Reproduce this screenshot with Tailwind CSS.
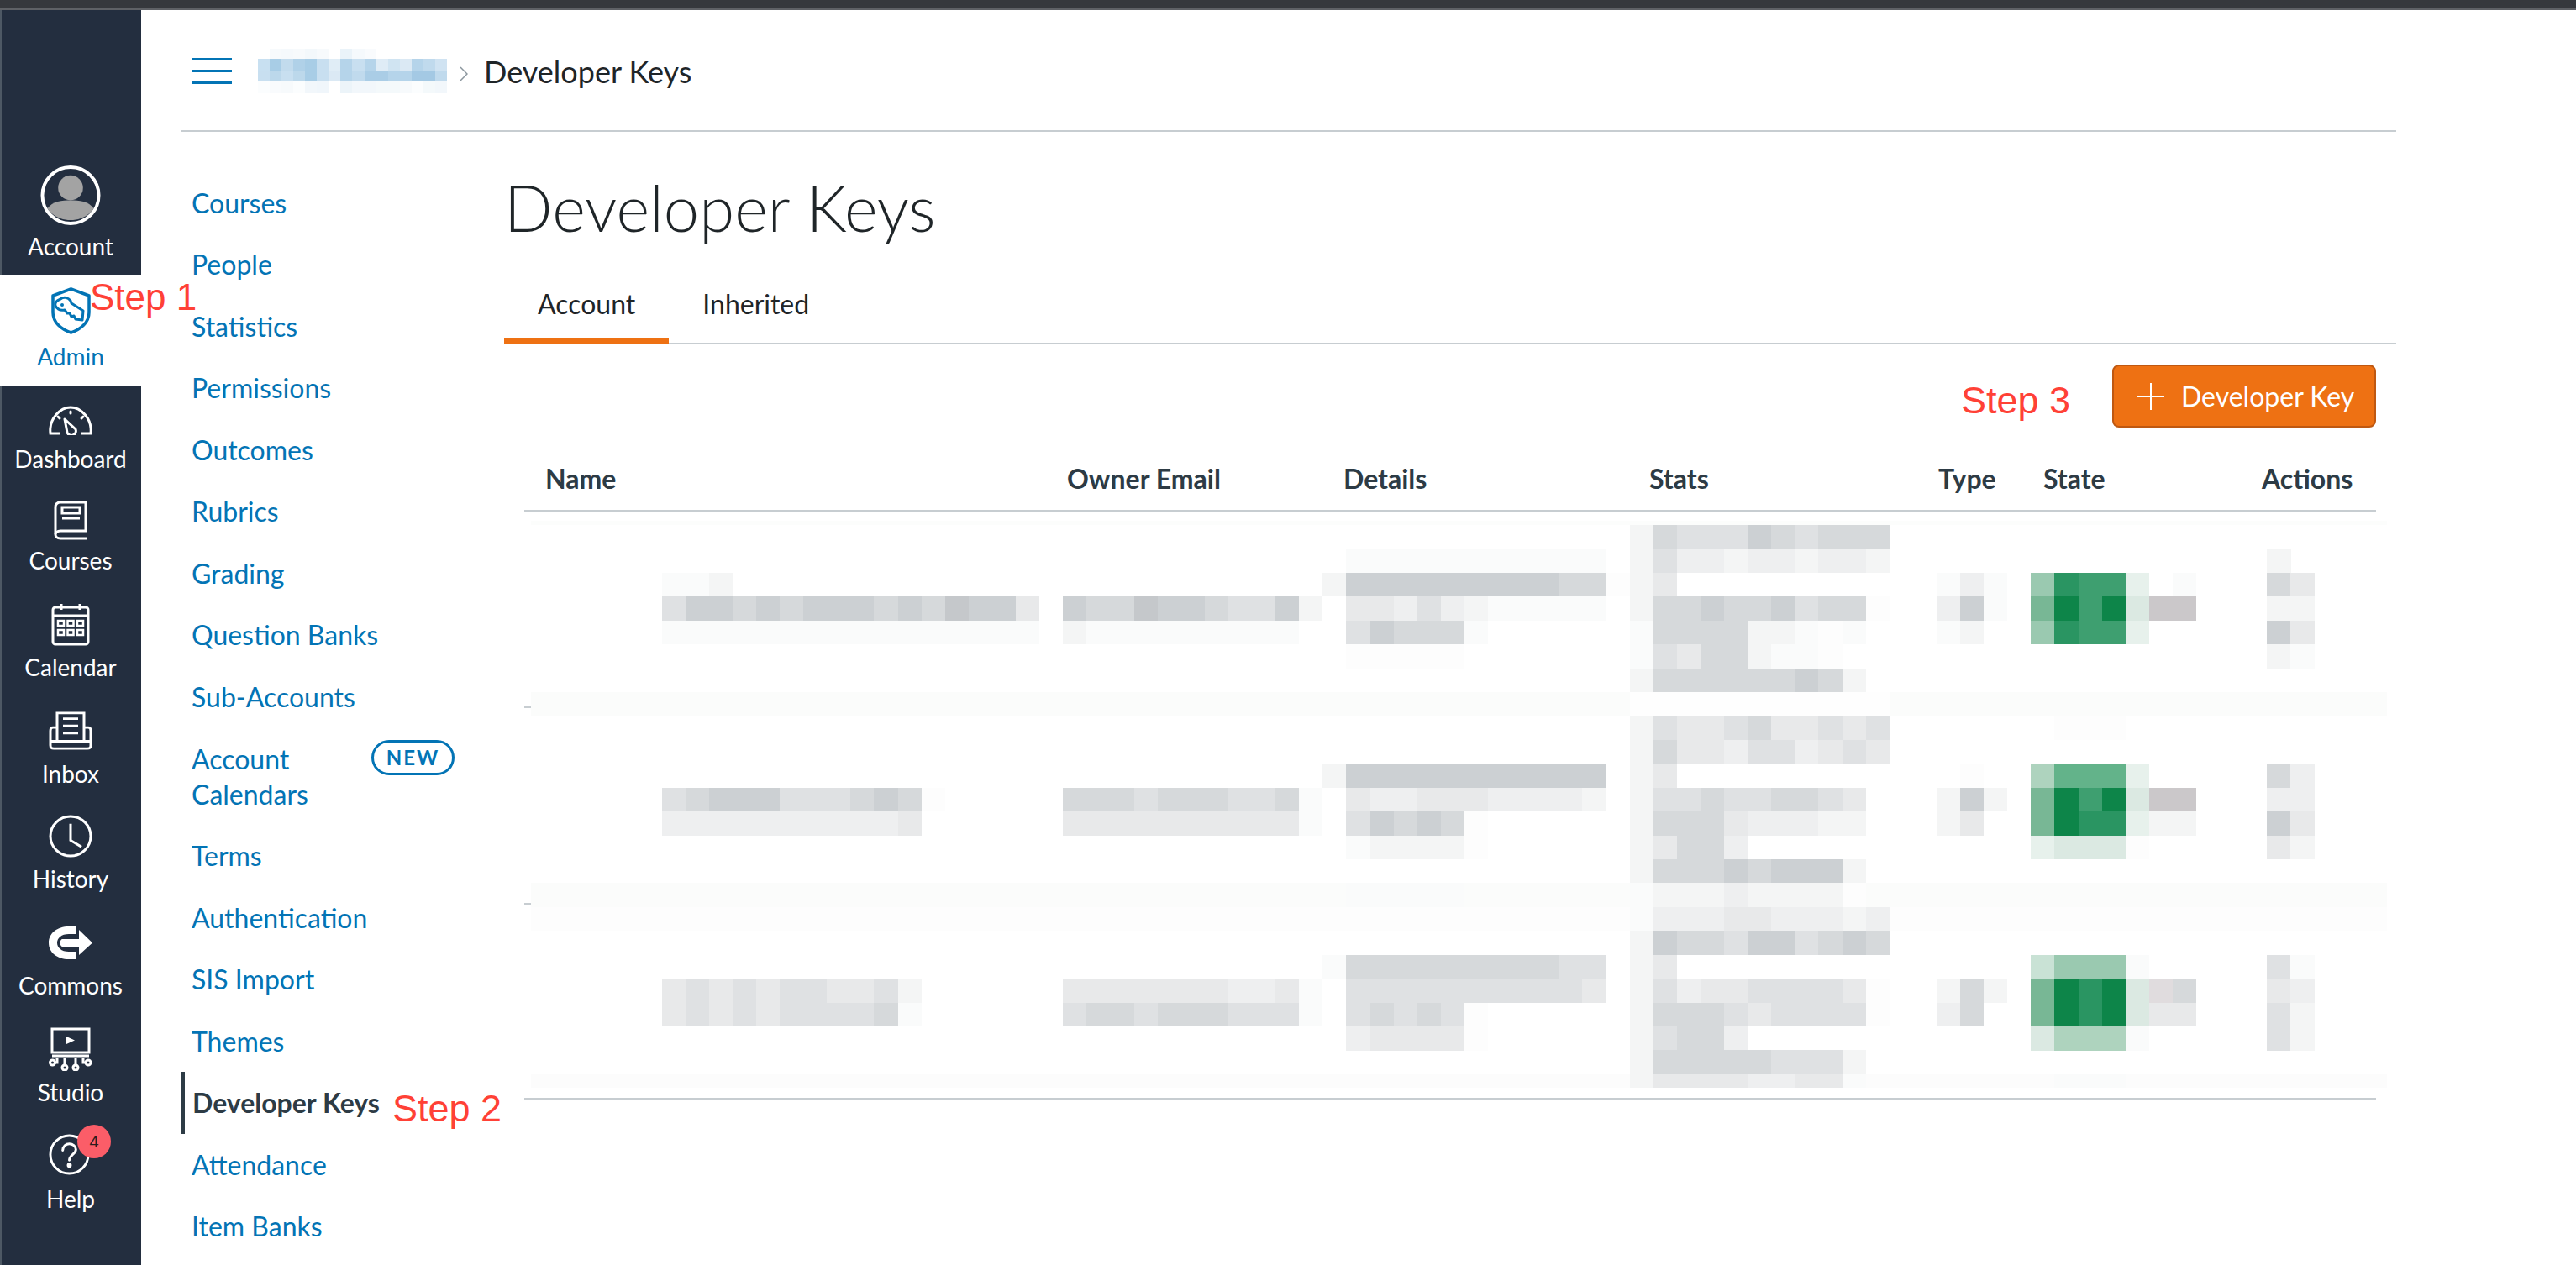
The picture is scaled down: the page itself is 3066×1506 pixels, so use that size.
<!DOCTYPE html>
<html lang="en">
<head>
<meta charset="utf-8">
<title>Developer Keys</title>
<script src="https://cdn.jsdelivr.net/npm/@tailwindcss/browser@4"></script>
</head>
<body class="bg-white">
<div class="relative w-[3066px] h-[1506px] overflow-hidden bg-white font-['Lato','Liberation_Sans',sans-serif] text-[#2d3b45]">
  <div class="h-[9px] bg-[#36383d]"></div>
  <div class="h-[3px] bg-[#5f6166]"></div>
  <div class="flex h-[1494px]">
    <!-- global nav -->
    <aside class="w-[168px] shrink-0 bg-[#232e3f] shadow-[inset_2px_0_0_#4d5864] text-white text-[28px] leading-[40px] text-center pt-[185px]">
      <a class="flex flex-col items-center h-[116px]">
        <svg class="w-[72px] h-[72px] mb-[5px]" viewBox="0 0 72 72"><circle cx="36" cy="36" r="34" fill="#232e3f" stroke="#fff" stroke-width="4"/><circle cx="36" cy="27" r="15" fill="#a3a3a3"/><path d="M8 52c6-9 18-10 28-10s22 1 28 10c-6 9-17 14-28 14S14 61 8 52z" fill="#a3a3a3"/></svg>
        <span>Account</span>
      </a>
      <a class="mt-[14px] flex flex-col items-center h-[132px] bg-white text-[#0374b5] pt-[15px]">
        <svg class="w-[47px] h-[56px] mb-[6px]" viewBox="0 0 47 56" fill="none" stroke="#0374b5"><path d="M23.5 2 45 10v20c0 12-10 20-21.500 24C12 50 2 42 2 30V10z" stroke-width="3.500" stroke-linejoin="round"/><path d="M11 14c4-3 9-2 12 2l1 3 14 9-1 11-8-1-2-4-3 1-2-4-3 0-3-4c-5 1-9-1-11-5-1-3 1-6 6-8z" stroke-width="3" stroke-linejoin="round"/><circle cx="13" cy="21" r="2" fill="#0374b5" stroke="none"/></svg>
        <span>Admin</span>
      </a>
      <a class="flex flex-col items-center justify-end h-[107px]">
        <svg class="w-[52px] h-[35px] mb-[8px]" viewBox="0 0 52 35" fill="none" stroke="#fff" stroke-width="3"><path d="M13 33H2C0 15 14 2 26 2s26 13 24 31H38"/><path d="M19 16l13 12a5 5 0 1 1-10 4z" stroke-linejoin="round"/><path d="M11 13l2 2M26 7v2M41 13l-2 2" stroke-linecap="round"/></svg>
        <span>Dashboard</span>
      </a>
      <a class="flex flex-col items-center justify-end h-[121px]">
        <svg class="w-[40px] h-[47px] mb-[4px]" viewBox="0 0 40 47" fill="none" stroke="#fff" stroke-width="3"><path d="M38 36V2H8C4 2 2 4 2 8v32"/><path d="M39 36H8c-8 0-8 9 0 9h31" stroke-linejoin="round"/><rect x="10" y="8" width="21" height="7"/><path d="M10 21h21"/></svg>
        <span>Courses</span>
      </a>
      <a class="flex flex-col items-center justify-end h-[127px]">
        <svg class="w-[46px] h-[51px] mb-[5px]" viewBox="0 0 46 51" fill="none" stroke="#fff" stroke-width="3"><rect x="2" y="5" width="42" height="44" rx="3"/><path d="M2 15h42M12 1v7M34 1v7"/><path d="M8 21h7v6H8zM19.500 21h7v6h-7zM31 21h7v6h-7zM8 32h7v6H8zM19.500 32h7v6h-7zM31 32h7v6h-7z" stroke-width="2.500"/></svg>
        <span>Calendar</span>
      </a>
      <a class="flex flex-col items-center justify-end h-[127px]">
        <svg class="w-[52px] h-[46px] mb-[8px]" viewBox="0 0 52 48" preserveAspectRatio="none" fill="none" stroke="#fff" stroke-width="3"><path d="M10 36V2h32v34"/><path d="M17 9h18M17 18h18M17 27h18"/><path d="M10 20H5c-2 0-3 1-3 4v18c0 3 1 4 4 4h40c3 0 4-1 4-4V24c0-3-1-4-3-4h-5"/><path d="M2 37h48"/></svg>
        <span>Inbox</span>
      </a>
      <a class="flex flex-col items-center justify-end h-[125px]">
        <svg class="w-[52px] h-[51px] mb-[5px]" viewBox="0 0 52 52" preserveAspectRatio="none" fill="none" stroke="#fff" stroke-width="3"><circle cx="26" cy="26" r="24"/><path d="M26 11v20l13 8"/></svg>
        <span>History</span>
      </a>
      <a class="flex flex-col items-center justify-end h-[127px]">
        <svg class="w-[52px] h-[39px] mb-[11px]" viewBox="0 0 52 39" fill="#fff"><path d="M24 0c-14 0-24 8-24 19.500S10 39 24 39h8v-9h-8c-9 0-14-5-14-10.500S15 9 24 9h8V0z"/><path d="M16 15h20V4l16 15.500L36 34V24H16c-3 0-3-9 0-9z"/></svg>
        <span>Commons</span>
      </a>
      <a class="flex flex-col items-center justify-end h-[127px]">
        <svg class="w-[52px] h-[52px] mb-[5px]" viewBox="0 0 52 52" fill="none" stroke="#fff" stroke-width="3"><rect x="4" y="2" width="44" height="28"/><path d="M4 34h44" stroke-width="3"/><path d="M21 11l10 4.500L21 20z" fill="#fff" stroke="none"/><path d="M10 36v6H7M19 36v9M32 36v9M41 36v6h3"/><circle cx="4.500" cy="42" r="3"/><circle cx="19" cy="48" r="3"/><circle cx="32" cy="48" r="3"/><circle cx="47" cy="42" r="3"/></svg>
        <span>Studio</span>
      </a>
      <a class="relative flex flex-col items-center justify-end h-[127px]">
        <svg class="w-[49px] h-[49px] mb-[8px] -ml-[3px]" viewBox="0 0 50 50" fill="none" stroke="#fff" stroke-width="3"><circle cx="25" cy="25" r="23"/><path d="M17 20c0-5 4-8 8-8s8 3 8 7c0 6-8 6-8 13" stroke-linecap="round"/><circle cx="25" cy="38" r="1.500" fill="#fff"/></svg>
        <span>Help</span>
        <span class="absolute left-[92px] top-[19px] w-[40px] h-[40px] rounded-full bg-[#fb5d68] text-[#2b1c20] text-[20px] leading-[40px] font-['Liberation_Sans',sans-serif]">4</span>
      </a>
    </aside>

    <div class="ml-[48px] w-[2636px]">
      <!-- breadcrumb -->
      <header class="flex items-center h-[145px] border-b-2 border-[#c7cdd1] pt-[2px]">
        <div class="ml-[12px] w-[48px] h-[31px] flex flex-col justify-between">
          <span class="block h-[3px] bg-[#0374b5]"></span>
          <span class="block h-[3px] bg-[#0374b5]"></span>
          <span class="block h-[3px] bg-[#0374b5]"></span>
        </div>
        <svg id="crumb" class="ml-[31px] w-[225px] h-[53px]" viewBox="0 0 225 53" shape-rendering="crispEdges"></svg>
        <svg class="ml-[15px] w-[10px] h-[18px] mt-[6px]" viewBox="0 0 10 18" fill="none" stroke="#8b969e" stroke-width="1.500"><path d="M1 1l8 8-8 8"/></svg>
        <span class="ml-[19px] text-[36px] leading-[48px] text-[#1f2528]">Developer Keys</span>
      </header>

      <div class="flex">
        <!-- account nav -->
        <nav class="w-[384px] shrink-0 pt-[48px] text-[32px] leading-[42px] text-[#0374b5]">
          <a class="block pl-[12px] py-[15.780px]">Courses</a>
          <a class="block pl-[12px] py-[15.780px]">People</a>
          <a class="block pl-[12px] py-[15.780px]">Statistics</a>
          <a class="block pl-[12px] py-[15.780px]">Permissions</a>
          <a class="block pl-[12px] py-[15.780px]">Outcomes</a>
          <a class="block pl-[12px] py-[15.780px]">Rubrics</a>
          <a class="block pl-[12px] py-[15.780px]">Grading</a>
          <a class="block pl-[12px] py-[15.780px]">Question Banks</a>
          <a class="block pl-[12px] py-[15.780px]">Sub-Accounts</a>
          <a class="flex items-start justify-between w-[325px] pl-[12px] py-[15.780px]">
            <span>Account<br>Calendars</span>
            <span class="mt-[-2px] flex items-center justify-center w-[99px] h-[42px] rounded-full border-[3px] border-[#0374b5] text-[24px] leading-none font-bold tracking-[2px]">NEW</span>
          </a>
          <a class="block pl-[12px] py-[15.780px]">Terms</a>
          <a class="block pl-[12px] py-[15.780px]">Authentication</a>
          <a class="block pl-[12px] py-[15.780px]">SIS Import</a>
          <a class="block pl-[12px] py-[15.780px]">Themes</a>
          <a class="block pl-[9px] py-[15.780px] border-l-4 border-[#2d3b45] font-bold text-[#2d3b45]">Developer Keys</a>
          <a class="block pl-[12px] py-[15.780px]">Attendance</a>
          <a class="block pl-[12px] py-[15.780px]">Item Banks</a>
        </nav>

        <!-- content -->
        <main class="flex-1 pt-[45px]">
          <h1 class="text-[76px] leading-[90px] font-light text-[#1f2528]">Developer Keys</h1>
          <div class="mt-[18px] flex h-[100px] items-start border-b-2 border-[#c7cdd1] text-[32px] leading-[48px] text-[#1f2528]">
            <span class="h-[100px] px-[40px] pt-[28px] border-b-8 border-[#ee7113]">Account</span>
            <span class="px-[40px] pt-[28px]">Inherited</span>
          </div>
          <div class="flex justify-end mt-[24px] mr-[24px]">
            <button class="flex items-center w-[314px] h-[75px] rounded-[8px] border-2 border-[#bf5811] bg-[#ee7113] text-white text-[32px] pl-[28px]">
              <svg class="w-[32px] h-[32px] mr-[20px]" viewBox="0 0 32 32" stroke="#fff" stroke-width="2"><path d="M16 0v32M0 16h32"/></svg>
              <span>Developer Key</span>
            </button>
          </div>
          <div class="mx-[24px]">
            <div class="grid grid-cols-[646px_329px_364px_344px_125px_260px_136px] pt-[37px] pb-[13px] border-b-2 border-[#c7cdd1] text-[32px] leading-[48px] font-bold">
              <span class="pl-[25px]">Name</span>
              <span>Owner Email</span>
              <span>Details</span>
              <span>Stats</span>
              <span>Type</span>
              <span>State</span>
              <span>Actions</span>
            </div>
            <div class="relative h-[700px] border-b-2 border-[#c7cdd1]">
              <svg id="mosaic" class="absolute left-[8px] top-[11px] w-[2209px] h-[676px] max-w-none" viewBox="0 0 2209 676" shape-rendering="crispEdges"></svg>
              <span class="absolute left-0 top-[232px] w-[8px] h-[2px] bg-[#c7cdd1]"></span>
              <span class="absolute left-0 top-[466px] w-[8px] h-[2px] bg-[#c7cdd1]"></span>
            </div>
          </div>
        </main>
      </div>
    </div>
  </div>

  <!-- hand-added annotations, lying over the page -->
  <span class="absolute left-[107px] top-[329px] text-[44px] leading-[50px] text-[#ff4136] font-['Liberation_Sans',sans-serif] whitespace-nowrap">Step 1</span>
  <span class="absolute left-[467px] top-[1295px] text-[45px] leading-[50px] text-[#ff4136] font-['Liberation_Sans',sans-serif] whitespace-nowrap">Step 2</span>
  <span class="absolute left-[2334px] top-[452px] text-[45px] leading-[50px] text-[#ff4136] font-['Liberation_Sans',sans-serif] whitespace-nowrap">Step 3</span>
</div>
<script>
const NS = "http://www.w3.org/2000/svg";
function rect(svg, x, y, w, h, fill) {
  const r = document.createElementNS(NS, "rect");
  r.setAttribute("x", x); r.setAttribute("y", y);
  r.setAttribute("width", w); r.setAttribute("height", h);
  r.setAttribute("fill", fill);
  svg.appendChild(r);
}
/* redacted breadcrumb */
const crumb = document.getElementById("crumb");
const crumbRows = [
  [0, 12, ["#fff","#f7fafc","#f5f9fc","#f7fafc","#f3f8fb","#f7fafc","#fff","#eaf3f9","#f5f9fc","#f9fbfd","#fff","#fff","#fff","#fff","#fff","#fff"]],
  [12, 14, ["#c8e0f1","#a8cde6","#c2dbed","#b0d1e8","#a8cde6","#c8dff0","#e0edf6","#b5d4ea","#c8dff0","#b5d4ea","#dfecf6","#d0e4f2","#dbe9f4","#b5d4ea","#c0daed","#d0e3f2"]],
  [26, 13, ["#c8dff0","#bcd8eb","#c8dff0","#bcd8eb","#a8cde6","#c8dff0","#dbe9f4","#b5d4ea","#c0daed","#aacde6","#aacde6","#b5d4ea","#b5d4ea","#a4c9e4","#a4c9e4","#c0daed"]],
  [39, 14, ["#fbfdfe","#f9fbfd","#f7fafc","#fbfdfe","#f2f7fb","#f0f6fb","#fff","#ecf4f9","#f2f7fb","#f2f7fb","#f4f9fb","#f4f9fb","#f7fafc","#fbfdfe","#f4f9fb","#f2f7fb"]]
];
crumbRows.forEach(([y, h, cells]) => cells.forEach((c, i) => rect(crumb, i * 14.06, y, 14.2, h, c)));

/* redacted table rows */
const P = {1:"#fdfdfd",2:"#fafbfb",3:"#f4f5f5",4:"#eeeff0",5:"#e8e9ea",6:"#dfe1e3",7:"#d6d9db",8:"#ccd0d3",9:"#c5c8cb",
  a:"#0d8549",b:"#2a9562",c:"#3e9f70",d:"#63b38a",e:"#78b795",f:"#9ac9b0",g:"#aed3be",h:"#c9e2d5",i:"#dbe9e2",j:"#e7f1ec",k:"#cbc8ca",l:"#e0dcde"};
const mosaic = document.getElementById("mosaic");
const X = c => 155.5 + 28.1 * c, Y = r => 5 + 28.43 * r;
rect(mosaic, 0, 0, 2209, 5, "#fcfdfc");
rect(mosaic, 0, Y(7), 2209, 28.5, "#fbfcfb");
rect(mosaic, X(41), Y(7), 28.1 * 11, 28.5, "#fefefe");
rect(mosaic, 0, Y(15), 2209, 28.5, "#fbfcfb");
rect(mosaic, 0, Y(16), 2209, 28.5, "#fdfdfd");
rect(mosaic, 0, Y(23), 2209, 16, "#fcfcfc");
const rows = [
  [[41,"3"],[42,"7666876777"]],
  [[29,"22222222222"],[41,"3"],[42,"6443443443"],[68,"3"]],
  [[0,"223"],[28,"3"],[29,"88888888877"],[40,"1"],[41,"3"],[42,"5"],[54,"242"],[58,"fbccj"],[64,"2"],[68,"75"]],
  [[0,"6887878887879885"],[17,"8779887668"],[27,"3"],[29,"55464322222"],[41,"3"],[42,"778778677"],[51,"1"],[54,"482"],[58,"eacaikk"],[68,"33"]],
  [[0,"2222222222222222"],[17,"3222222222"],[29,"687772"],[41,"2"],[42,"7777"],[46,"33212"],[54,"23"],[58,"fbccj"],[68,"85"]],
  [[29,"11111"],[41,"2"],[42,"6577"],[46,"3221"],[68,"32"]],
  [[41,"3"],[42,"77777787"],[50,"3"]],
  [],
  [[41,"3"],[42,"6556755656"],[59,"111"]],
  [[41,"3"],[42,"7554664565"]],
  [[28,"3"],[29,"88888888888"],[41,"3"],[42,"5"],[55,"1"],[58,"gdddj"],[68,"74"]],
  [[0,"67888666787"],[11,"1"],[17,"7776777667"],[27,"2"],[29,"54455544443"],[41,"3"],[42,"667667765"],[54,"383"],[58,"eacaikk"],[68,"44"]],
  [[0,"44444444445"],[17,"5555555555"],[27,"2"],[29,"68787"],[34,"1"],[41,"3"],[42,"777544433"],[54,"35"],[58,"eabbj33"],[68,"85"]],
  [[29,"23333"],[34,"1"],[41,"3"],[42,"5774"],[58,"jiii1"],[68,"53"]],
  [[41,"3"],[42,"77787888"],[50,"3"]],
  [[29,"22222"],[41,"2"],[42,"33343333"],[50,"1"]],
  [[41,"2"],[42,"4445544434"]],
  [[41,"3"],[42,"8776886787"]],
  [[28,"2"],[29,"77777777766"],[41,"3"],[42,"5"],[58,"hfff2"],[68,"62"]],
  [[0,"5656566556"],[10,"3"],[17,"5555555445"],[27,"2"],[29,"66666666665"],[41,"3"],[42,"645566665"],[51,"1"],[54,"373"],[58,"eabail7"],[68,"54"]],
  [[0,"5656566667"],[10,"2"],[17,"6776777666"],[27,"2"],[29,"67676"],[34,"1"],[41,"3"],[42,"777656666"],[51,"1"],[54,"47"],[58,"eabai55"],[68,"63"]],
  [[29,"45555"],[34,"1"],[41,"3"],[42,"6774"],[58,"iggg2"],[68,"63"]],
  [[41,"3"],[42,"77777666"],[50,"3"]],
  [[41,"3"],[42,"55554455"],[50,"2"],[59,"222"]]
];
rows.forEach((segs, r) => segs.forEach(([c, s]) => [...s].forEach((ch, i) => {
  rect(mosaic, X(c + i), Y(r), 28.2, r === 23 ? 16 : 28.5, P[ch]);
})));
</script>
</body>
</html>
